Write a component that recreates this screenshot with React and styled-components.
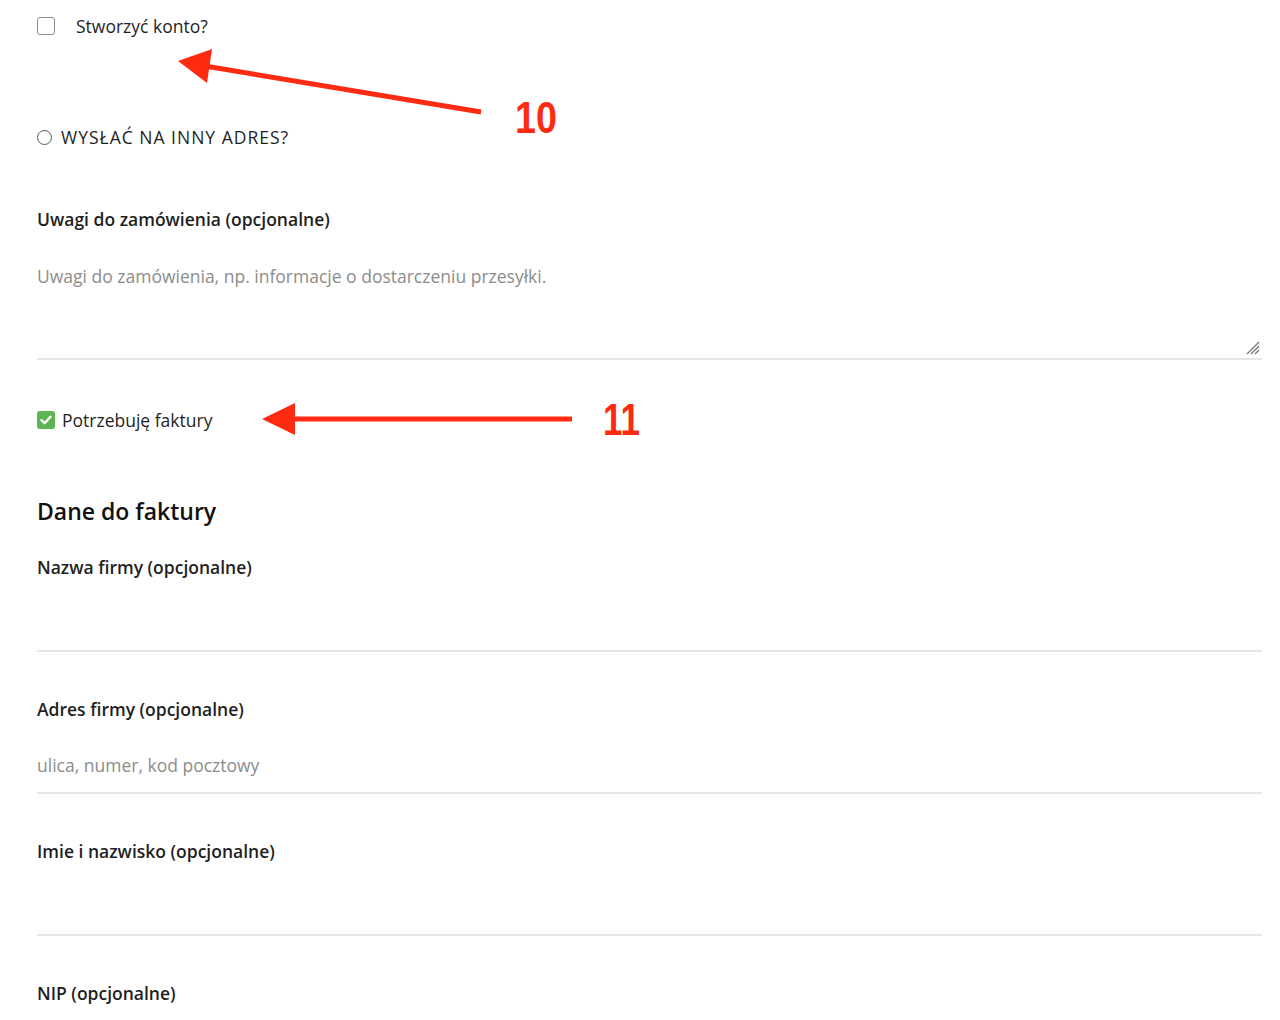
import React from "react";
import styled, { createGlobalStyle } from "styled-components";

const GlobalStyle = createGlobalStyle`
  body {
    margin: 0;
    background: #fff;
    font-family: "Open Sans", "Noto Sans", sans-serif;
    color: #1f1f1f;
  }
`;

const Page = styled.div`
  position: relative;
  width: 1280px;
  height: 1020px;
  overflow: hidden;
  background: #fff;
`;

const Form = styled.form`
  display: flex;
  flex-direction: column;
  padding: 14px 18px 0 37px;
`;

const CheckRow = styled.label`
  display: flex;
  align-items: center;
  gap: ${({ $gap }) => $gap || 8}px;
  height: 24px;
  font-size: 17.5px;
  margin-bottom: ${({ $mb }) => $mb || 0}px;
  cursor: pointer;
`;

const Box = styled.span`
  width: 18px;
  height: 18px;
  box-sizing: border-box;
  border-radius: 3px;
  border: ${({ $checked }) => ($checked ? "none" : "1.5px solid #8c8c8c")};
  background: ${({ $checked }) => ($checked ? "#5bb553" : "#fff")};
  display: flex;
  align-items: center;
  justify-content: center;
`;

const Radio = styled.span`
  width: 15px;
  height: 15px;
  box-sizing: border-box;
  border-radius: 50%;
  border: 1px solid #555;
`;

const Caps = styled.span`
  text-transform: uppercase;
  letter-spacing: 1px;
`;

const Field = styled.div`
  display: flex;
  flex-direction: column;
  margin-bottom: ${({ $mb }) => ($mb === undefined ? 45 : $mb)}px;
`;

const Label = styled.label`
  font-size: 17.5px;
  line-height: 24px;
  font-weight: 600;
  color: #1f1f1f;
`;

const Input = styled.div`
  height: ${({ $h }) => $h || 73}px;
  box-sizing: border-box;
  padding-top: ${({ $pt }) => $pt || 32}px;
  border-bottom: 2px solid #e6e6e6;
  font-size: 17.5px;
  line-height: 24px;
  color: #8c8c8c;
  position: relative;
`;

const Grip = styled.svg`
  position: absolute;
  right: 2px;
  bottom: 3px;
`;

const Heading = styled.h3`
  margin: 0 0 28px;
  font-size: 23px;
  line-height: 32px;
  font-weight: 600;
  color: #111;
`;

const Overlay = styled.svg`
  position: absolute;
  left: 0;
  top: 0;
  pointer-events: none;
`;

const Tick = () => (
  <svg width="12" height="10" viewBox="0 0 12 10">
    <path d="M1.5 5.2 L4.6 8.2 L10.5 1.8" fill="none" stroke="#fff" strokeWidth="2.4" strokeLinecap="round" strokeLinejoin="round" />
  </svg>
);

export default function App() {
  return (
    <Page>
      <GlobalStyle />
      <Form>
        <CheckRow $gap={21} $mb={87}>
          <Box />
          Stworzyć konto?
        </CheckRow>
        <CheckRow $gap={9} $mb={58}>
          <Radio />
          <Caps>Wysłać na inny adres?</Caps>
        </CheckRow>
        <Field $mb={48}>
          <Label>Uwagi do zamówienia (opcjonalne)</Label>
          <Input $h={129} $pt={33}>
            Uwagi do zamówienia, np. informacje o dostarczeniu przesyłki.
            <Grip width="16" height="16" viewBox="0 0 16 16">
              <path d="M15 3 L3 15 M15 7 L7 15 M15 11 L11 15" stroke="#777" strokeWidth="1.3" />
            </Grip>
          </Input>
        </Field>
        <CheckRow $gap={7} $mb={63}>
          <Box $checked>
            <Tick />
          </Box>
          Potrzebuję faktury
        </CheckRow>
        <Heading>Dane do faktury</Heading>
        <Field>
          <Label>Nazwa firmy (opcjonalne)</Label>
          <Input />
        </Field>
        <Field>
          <Label>Adres firmy (opcjonalne)</Label>
          <Input>ulica, numer, kod pocztowy</Input>
        </Field>
        <Field>
          <Label>Imie i nazwisko (opcjonalne)</Label>
          <Input />
        </Field>
        <Field>
          <Label>NIP (opcjonalne)</Label>
        </Field>
      </Form>

      <Overlay width="1280" height="1020">
        <line x1="481" y1="112" x2="205" y2="66" stroke="#ff2a12" strokeWidth="5" />
        <polygon points="178,61 212,49 207,83" fill="#ff2a12" />
        <text x="515" y="133" textLength="42" lengthAdjust="spacingAndGlyphs" fill="#ff2a12" fontFamily="Liberation Sans, Arial, sans-serif" fontWeight="700" fontSize="45">10</text>
        <line x1="572" y1="419" x2="290" y2="419" stroke="#ff2a12" strokeWidth="5" />
        <polygon points="262,419 295,403 295,435" fill="#ff2a12" />
        <text x="603" y="435" textLength="37" lengthAdjust="spacingAndGlyphs" fill="#ff2a12" fontFamily="Liberation Sans, Arial, sans-serif" fontWeight="700" fontSize="45">11</text>
      </Overlay>
    </Page>
  );
}
